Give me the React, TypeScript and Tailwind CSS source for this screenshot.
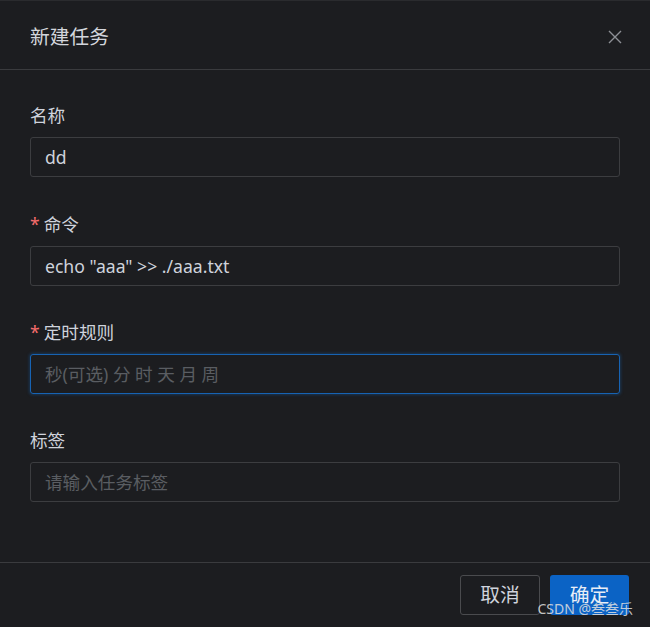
import React from "react";

const font = { fontFamily: '"Noto Sans", "Noto Sans CJK SC", sans-serif' };

function Field({
  label,
  required,
  value,
  placeholder,
  focused,
  gapClass,
}: {
  label: string;
  required?: boolean;
  value?: string;
  placeholder?: string;
  focused?: boolean;
  gapClass: string;
}) {
  return (
    <div className={gapClass}>
      <div className="flex h-[22px] items-center text-[17.6px] leading-[22px] text-[#cfd3dc]">
        {required && <span className="mr-[4px] text-[#f56c6c]">*</span>}
        <span>{label}</span>
      </div>
      <div
        className={
          "mt-[11px] flex h-[40px] items-center rounded-[3px] border px-[14px] text-[17.6px] " +
          (focused
            ? "border-[#1763b3] shadow-[0_0_3px_1px_rgba(23,99,179,0.35)]"
            : "border-[#3c3d40]")
        }
      >
        {value ? (
          <span className="text-[#cfd3dc]">{value}</span>
        ) : (
          <span className="text-[#5a5d62]">{placeholder}</span>
        )}
      </div>
    </div>
  );
}

export default function App() {
  return (
    <div
      className="relative h-[627px] w-[650px] overflow-hidden border-t border-[#2a2b2e] bg-[#1c1d20]"
      style={font}
    >
      <div className="flex h-[69px] items-center justify-between border-b border-[#3a3b3e] pl-[30px] pr-[27px] pt-[3px]">
        <span className="text-[19.8px] text-[#d3d6dc]">新建任务</span>
        <svg width="16" height="16" viewBox="0 0 16 16" className="text-[#8d9095]">
          <path d="M2 2 L14 14 M14 2 L2 14" stroke="currentColor" strokeWidth="1.4" fill="none" />
        </svg>
      </div>
      <div className="px-[30px] pb-[60px] pt-[34px]">
        <Field gapClass="mb-[36px]" label="名称" value="dd" />
        <Field gapClass="mb-[35px]" label="命令" required value={'echo "aaa" >> ./aaa.txt'} />
        <Field gapClass="mb-[35px]" label="定时规则" required placeholder="秒(可选) 分 时 天 月 周" focused />
        <Field gapClass="mb-0" label="标签" placeholder="请输入任务标签" />
      </div>
      <div className="flex justify-end gap-[10px] border-t border-[#3a3b3e] pr-[21px] pt-[12px]">
        <button className="h-[40px] w-[80px] rounded-[3px] border border-[#4a4b4e] text-[19.8px] text-[#cfd3dc]">
          取消
        </button>
        <button className="h-[40px] w-[79px] rounded-[3px] bg-[#0b63c5] text-[19.8px] text-[#e8eef7]">
          确定
        </button>
      </div>
      <div className="absolute bottom-[10px] right-[17px] text-[14px] leading-[16px] text-[rgba(225,225,225,0.85)]">
        CSDN @叁叁乐
      </div>
    </div>
  );
}
